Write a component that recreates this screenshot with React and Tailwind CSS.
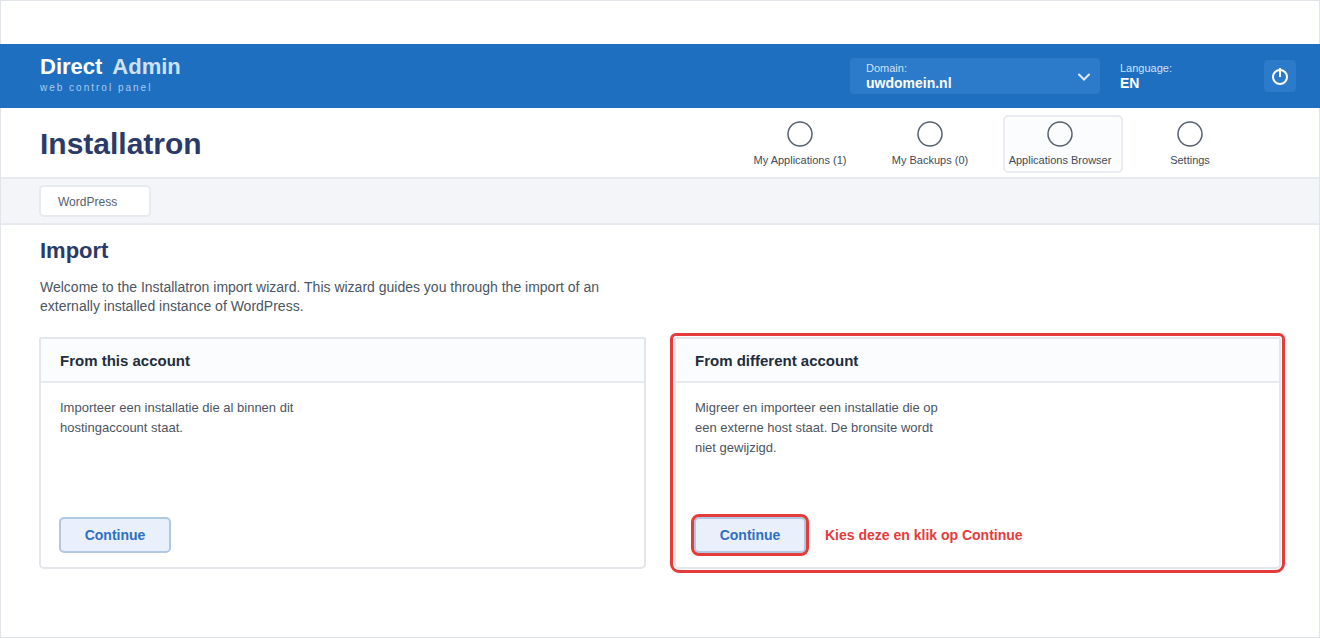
import { useState } from 'react';

const NAV_ITEMS = [
  { id: 'apps', label: 'My Applications (1)' },
  { id: 'backups', label: 'My Backups (0)' },
  { id: 'browser', label: 'Applications Browser' },
  { id: 'settings', label: 'Settings' },
];

function Topbar() {
  const [domain, setDomain] = useState('uwdomein.nl');

  return (
    <header className="-mx-px flex h-16 items-center justify-between bg-[#1f6fc1] pl-10 pr-6 text-white">
      <div className="pb-1">
        <p className="flex gap-2.5 text-[22px] leading-7 font-bold">
          <span>Direct</span>
          <span className="text-[#cfe2f7]">Admin</span>
        </p>
        <p className="text-[10px] leading-[14px] tracking-[2px] text-[#a9cbee]">web control panel</p>
      </div>

      <div className="flex items-center">
        <div className="relative mr-5 h-9 w-[250px] rounded bg-[#2c7aca] px-4 pt-1">
          <label htmlFor="domain" className="block text-[11px] leading-3 text-[#cfe2f7]">
            Domain:
          </label>
          <select
            id="domain"
            value={domain}
            onChange={(e) => setDomain(e.target.value)}
            className="block w-full appearance-none bg-transparent text-sm leading-[18px] font-bold text-white outline-none"
          >
            <option>uwdomein.nl</option>
          </select>
          <svg
            className="pointer-events-none absolute top-3 right-2 h-4 w-4"
            viewBox="0 0 16 16"
            fill="none"
            stroke="#dbe9f8"
            strokeWidth="2"
            strokeLinecap="round"
          >
            <path d="M3 4.5l5 5 5-5" />
          </svg>
        </div>

        <div className="h-9 w-36 pt-1">
          <p className="text-[11px] leading-3 text-[#cfe2f7]">Language:</p>
          <p className="text-sm leading-[18px] font-bold">EN</p>
        </div>

        <button type="button" aria-label="Log out" className="h-8 w-8 rounded bg-[#2c7aca]">
          <svg viewBox="0 0 32 32" fill="none" stroke="#fff" strokeWidth="2">
            <circle cx="16" cy="17" r="7" />
            <path d="M16 8v9" />
          </svg>
        </button>
      </div>
    </header>
  );
}

function NavItem({ label, active }) {
  return (
    <button
      type="button"
      className={`flex h-[58px] w-[120px] flex-col items-center rounded-[5px] border-2 pt-1 pr-1.5 ${
        active ? 'border-[#e9ecf0] bg-[#fbfcfe]' : 'border-transparent'
      }`}
    >
      <svg className="h-[26px] w-[26px]" viewBox="0 0 26 26" fill="none" stroke="#55606e" strokeWidth="1.5">
        <circle cx="13" cy="13" r="12" />
      </svg>
      <span className="mt-[5px] text-[11px] leading-4 whitespace-nowrap text-[#414b55]">{label}</span>
    </button>
  );
}

function ImportCard({ title, text, highlighted, hint }) {
  return (
    <section
      className={`flex h-[232px] flex-col rounded-t-[2px] rounded-b-[5px] border-2 border-[#e3e7ec] ${
        highlighted ? 'outline-3 outline-offset-1 outline-[#e53b3b]' : ''
      }`}
    >
      <h3 className="h-11 border-b-2 border-[#e7eaee] bg-[#fbfcfe] px-[19px] text-[15px] leading-[44px] font-bold text-[#212d3b]">
        {title}
      </h3>
      <p className="px-[19px] pt-[15px] text-[13px] leading-5 text-[#4b5563]">{text}</p>
      <div className="mt-auto flex items-center gap-[19px] px-[18px] pb-3.5">
        <button
          type="button"
          className={`h-9 w-28 rounded-[5px] border-2 border-[#b1c8e5] bg-[#e9f0fb] text-sm font-bold text-[#2f6fc4] ${
            highlighted ? 'outline-3 outline-[#e53b3b]' : ''
          }`}
        >
          Continue
        </button>
        {hint && <p className="text-sm font-bold text-[#e53b3b]">{hint}</p>}
      </div>
    </section>
  );
}

export default function App() {
  return (
    <div className="min-h-screen border border-[#e1e5ea] bg-white pt-[43px] font-['Liberation_Sans',Arial,sans-serif]">
      <Topbar />

      <div className="flex h-[69px] items-center justify-between pt-0.5 pr-[66px] pl-[39px]">
        <h1 className="text-3xl font-bold text-[#2b3a67]">Installatron</h1>
        <nav className="flex gap-2.5">
          {NAV_ITEMS.map((item) => (
            <NavItem key={item.id} label={item.label} active={item.id === 'browser'} />
          ))}
        </nav>
      </div>

      <div className="flex h-12 items-center border-y-2 border-[#e7eaee] bg-[#f4f5f8] px-[38px]">
        <a
          href="#wordpress"
          className="h-8 w-28 rounded-[5px] border-2 border-[#e7eaee] bg-white px-[17px] text-xs leading-[30px] text-[#55606e]"
        >
          WordPress
        </a>
      </div>

      <main className="px-[38px] pt-3">
        <div className="px-px">
          <h2 className="text-[22px] leading-7 font-bold text-[#2b3a67]">Import</h2>
          <p className="mt-[13px] text-sm leading-[19px] text-[#4b5563]">
            Welcome to the Installatron import wizard. This wizard guides you through the import of an
            <br />
            externally installed instance of WordPress.
          </p>
        </div>

        <div className="mt-[21px] grid grid-cols-2 gap-7">
          <ImportCard
            title="From this account"
            text={<>Importeer een installatie die al binnen dit<br />hostingaccount staat.</>}
          />
          <ImportCard
            title="From different account"
            text={<>Migreer en importeer een installatie die op<br />een externe host staat. De bronsite wordt<br />niet gewijzigd.</>}
            hint="Kies deze en klik op Continue"
            highlighted
          />
        </div>
      </main>
    </div>
  );
}
